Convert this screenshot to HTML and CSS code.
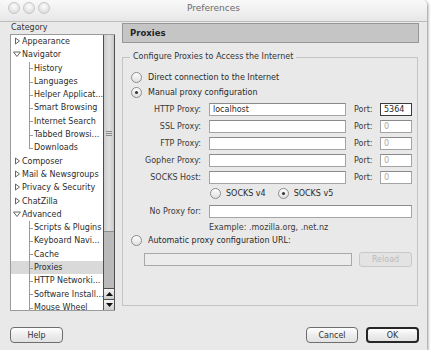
FILE: index.html
```html
<!DOCTYPE html>
<html>
<head>
<meta charset="utf-8">
<link rel="stylesheet" href="styles.css">
</head>
<body>
<div class="window">
  <div class="titlebar">
    <div class="lights"><span class="light"></span><span class="light"></span><span class="light"></span></div>
    <div class="title">Preferences</div>
    <div></div>
  </div>
  <div class="body">
    <aside class="sidebar">
      <div class="cat-label">Category</div>
      <div class="tree">
        <ul class="tree-list">
          <li class="row parent"><svg class="tw" width="8" height="8" viewBox="0 0 8 8"><polygon points="2.5,1 6.5,4 2.5,7"/></svg>Appearance</li>
          <li class="row parent"><svg class="tw" width="8" height="8" viewBox="0 0 8 8"><polygon points="0.5,2 7.5,2 4,6.5"/></svg>Navigator</li>
          <li class="row child">History</li>
          <li class="row child">Languages</li>
          <li class="row child">Helper Applicat...</li>
          <li class="row child">Smart Browsing</li>
          <li class="row child">Internet Search</li>
          <li class="row child">Tabbed Browsi...</li>
          <li class="row child last">Downloads</li>
          <li class="row parent"><svg class="tw" width="8" height="8" viewBox="0 0 8 8"><polygon points="2.5,1 6.5,4 2.5,7"/></svg>Composer</li>
          <li class="row parent"><svg class="tw" width="8" height="8" viewBox="0 0 8 8"><polygon points="2.5,1 6.5,4 2.5,7"/></svg>Mail &amp; Newsgroups</li>
          <li class="row parent"><svg class="tw" width="8" height="8" viewBox="0 0 8 8"><polygon points="2.5,1 6.5,4 2.5,7"/></svg>Privacy &amp; Security</li>
          <li class="row parent"><svg class="tw" width="8" height="8" viewBox="0 0 8 8"><polygon points="2.5,1 6.5,4 2.5,7"/></svg>ChatZilla</li>
          <li class="row parent"><svg class="tw" width="8" height="8" viewBox="0 0 8 8"><polygon points="0.5,2 7.5,2 4,6.5"/></svg>Advanced</li>
          <li class="row child">Scripts &amp; Plugins</li>
          <li class="row child">Keyboard Navi...</li>
          <li class="row child">Cache</li>
          <li class="row child selected">Proxies</li>
          <li class="row child">HTTP Networki...</li>
          <li class="row child">Software Install...</li>
          <li class="row child">Mouse Wheel</li>
        </ul>
        <div class="scrollbar">
          <div class="thumb"><span class="grip"></span></div>
          <div class="track"></div>
          <div class="arrow"><svg width="7" height="4" viewBox="0 0 7 4"><polygon points="0,4 3.5,0 7,4"/></svg></div>
          <div class="arrow"><svg width="7" height="4" viewBox="0 0 7 4"><polygon points="0,0 7,0 3.5,4"/></svg></div>
        </div>
      </div>
    </aside>
    <main class="main">
      <div class="header">Proxies</div>
      <fieldset class="group">
        <legend>Configure Proxies to Access the Internet</legend>
        <div class="radio-row r-direct"><span class="radio"></span>Direct connection to the Internet</div>
        <div class="radio-row r-manual"><span class="radio on"></span>Manual proxy configuration</div>
        <div class="field-row first"><span class="lbl">HTTP Proxy:</span><span class="input">localhost</span><span class="plbl">Port:</span><span class="input port focus">5364</span></div>
        <div class="field-row"><span class="lbl">SSL Proxy:</span><span class="input"></span><span class="plbl">Port:</span><span class="input port">0</span></div>
        <div class="field-row"><span class="lbl">FTP Proxy:</span><span class="input"></span><span class="plbl">Port:</span><span class="input port">0</span></div>
        <div class="field-row"><span class="lbl">Gopher Proxy:</span><span class="input"></span><span class="plbl">Port:</span><span class="input port">0</span></div>
        <div class="field-row"><span class="lbl">SOCKS Host:</span><span class="input"></span><span class="plbl">Port:</span><span class="input port">0</span></div>
        <div class="socks-row"><span class="radio"></span><span class="socks-lbl">SOCKS v4</span><span class="radio on"></span><span>SOCKS v5</span></div>
        <div class="field-row noproxy"><span class="lbl">No Proxy for:</span><span class="input wide"></span></div>
        <div class="example">Example: .mozilla.org, .net.nz</div>
        <div class="radio-row r-auto"><span class="radio"></span>Automatic proxy configuration URL:</div>
        <div class="url-row"><span class="input url"></span><button class="btn reload">Reload</button></div>
      </fieldset>
    </main>
  </div>
  <div class="footer">
    <button class="btn help">Help</button>
    <button class="btn cancel">Cancel</button>
    <button class="btn ok">OK</button>
  </div>
</div>
</body>
</html>
```
FILE: styles.css
```css
* { box-sizing: border-box; }
body {
  margin: 0;
  background: #fff;
  font-family: "DejaVu Sans", sans-serif;
  font-size: 8px;
  color: #2a2a2a;
}
.window {
  width: 427px;
  height: 350px;
  background: #e9e9e9;
  border-radius: 5px 5px 0 0;
  box-shadow: 1px 1px 3px rgba(0,0,0,.45);
  display: flex;
  flex-direction: column;
  overflow: hidden;
}
.titlebar {
  height: 22px;
  flex: none;
  display: grid;
  grid-template-columns: 1fr auto 1fr;
  align-items: start;
  background: linear-gradient(#f9f9f9, #e7e7e7);
  border-bottom: 1px solid #bcbcbc;
}
.lights { display: flex; gap: 3px; padding: 1.5px 0 0 8px; }
.light {
  width: 12px; height: 12px; border-radius: 50%;
  border: 1px solid #c6c6c6;
  background: radial-gradient(circle at 50% 35%, #fdfdfd, #dedede 75%);
}
.title { font-size: 9px; color: #6c6c6c; line-height: 10px; padding-top: 3px; }

.body { display: flex; height: 294px; flex: none; }
.sidebar { width: 115px; padding-left: 10px; display: flex; flex-direction: column; flex: none; }
.cat-label { height: 12px; line-height: 12px; padding-left: 1px; color: #333; }
.tree {
  height: 277px;
  border: 1px solid #9b9b9b;
  border-right: none;
  background: #fff;
  display: flex;
}
.tree-list { flex: 1; list-style: none; margin: 0; padding: 0; overflow: hidden; }
.row { height: 13.3px; line-height: 13.3px; white-space: nowrap; position: relative; color: #2c2c2c; }
.parent { padding-left: 2px; }
.tw { display: inline-block; vertical-align: -1px; margin-right: 1px; }
.tw polygon { fill: none; stroke: #666; stroke-width: 1; }
.child { padding-left: 23px; }
.child::before { content: ""; position: absolute; left: 18px; top: 0; bottom: 0; width: 1px; background: #9a9a9a; }
.child.last::before { bottom: 50%; }
.child::after { content: ""; position: absolute; left: 18px; top: 50%; width: 4px; height: 1px; background: #9a9a9a; }
.selected { background: #d9d9d9; }

.scrollbar {
  width: 12px; flex: none;
  border-left: 1px solid #4e4e4e;
  border-right: 1px solid #4e4e4e;
  display: flex; flex-direction: column;
}
.thumb {
  height: 197px;
  background: linear-gradient(90deg, #cacaca, #e0e0e0 50%, #cacaca);
  border-bottom: 1px solid #8e8e8e;
  display: flex; align-items: center; justify-content: center;
}
.grip { width: 6px; height: 5px; background: repeating-linear-gradient(#8c8c8c 0 1px, transparent 1px 2px); }
.track { flex: 1; background: #bababa; }
.arrow {
  height: 11px; flex: none;
  border-top: 1px solid #4e4e4e;
  background: linear-gradient(#f4f4f4, #cdcdcd);
  display: flex; align-items: center; justify-content: center;
}
.arrow polygon { fill: #111; }

.main { width: 297px; margin-left: 7px; flex: none; display: flex; flex-direction: column; }
.header {
  margin-top: 1px;
  height: 20px;
  background: #c5c5c5;
  border: 1px solid #979797;
  font-weight: bold;
  font-size: 8.5px;
  line-height: 18px;
  padding-left: 7px;
  color: #262626;
}
.group {
  margin: 9px 1px 0 0;
  padding: 0 0 38px;
  border: 1px solid #c4c4c4;
  min-width: 0;
  display: flex;
  flex-direction: column;
}
.group legend { margin-left: 7px; padding: 0 3px; line-height: 10px; color: #333; }

.radio-row { display: flex; align-items: center; gap: 6px; height: 12px; padding-left: 8px; }
.r-direct { margin-top: 9px; }
.r-manual { margin-top: 3.5px; }
.r-auto { margin-top: 1px; }
.radio {
  width: 11px; height: 11px; flex: none;
  border-radius: 50%;
  border: 1px solid #8c8c8c;
  background: linear-gradient(#fdfdfd, #e0e0e0);
  position: relative;
}
.radio.on::after {
  content: ""; position: absolute; left: 3px; top: 3px;
  width: 3px; height: 3px; border-radius: 50%; background: #333;
}

.field-row {
  display: grid;
  grid-template-columns: 78px 137px 18px 32px;
  column-gap: 8px;
  align-items: center;
  height: 13px;
  margin-top: 4px;
}
.field-row.first { margin-top: 4.5px; }
.lbl { text-align: right; color: #3a3a3a; }
.plbl { color: #3a3a3a; }
.input {
  height: 13px;
  border: 1px solid #a4a4a4;
  border-top-color: #8a8a8a;
  background: #fff;
  padding: 0 3px;
  line-height: 11px;
  color: #2a2a2a;
}
.port { color: #a9a9a9; }
.port.focus { border-color: #3c3c3c; color: #2a2a2a; }
.noproxy { margin-top: 6px; }
.wide { grid-column: 2 / 5; }
.socks-row { display: flex; align-items: center; height: 12px; margin-top: 3px; padding-left: 87px; gap: 5px; }
.socks-lbl { margin-right: 7px; }
.example { margin-top: 5px; height: 10px; line-height: 10px; padding-left: 86px; color: #3a3a3a; }
.url-row { display: flex; align-items: center; gap: 7px; margin-top: 6px; height: 15px; padding-left: 21px; }
.url { width: 208px; background: #ececec; border-color: #a8a8a8; }

.btn {
  height: 16px;
  border: 1px solid #6e6e6e;
  border-radius: 4px;
  background: linear-gradient(#ffffff, #ededed 50%, #e2e2e2);
  font-family: "DejaVu Sans", sans-serif;
  font-size: 8px;
  color: #333;
  padding: 0;
}
.reload { width: 53px; height: 15px; border-radius: 3px; border-color: #c8c8c8; background: #e3e3e3; color: #bcbcbc; }
.footer { display: flex; gap: 8px; padding: 11px 8px 0 10px; }
.help { width: 53px; }
.cancel { width: 52px; margin-left: auto; }
.ok { width: 53px; border: 2px solid #262626; }
```
